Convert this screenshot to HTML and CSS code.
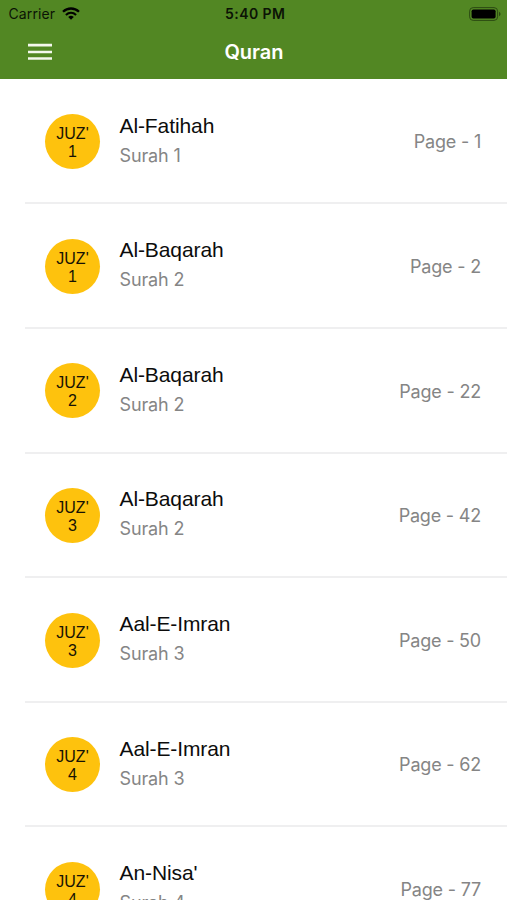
FILE: index.html
```html
<!DOCTYPE html>
<html lang="en">
<head>
<meta charset="utf-8">
<title>Quran</title>
<link rel="stylesheet" href="styles.css">
</head>
<body>
<header class="header">
  <div class="status">
    <div class="carrier"><span>Carrier</span>
      <svg class="wifi" viewBox="0 0 18 13" width="18" height="13"><g fill="none" stroke="#000"><path d="M1 4.800C5.500.4 12.500.4 17 4.800" stroke-width="2.300"/><path d="M3.900 8C7 5.100 11 5.100 14.100 8" stroke-width="2.100"/></g><path d="M6.200 9.900Q9 7.700 11.800 9.900L9 12.700Z"/></svg>
    </div>
    <div class="clock">5:40 PM</div>
    <svg class="battery" viewBox="0 0 32 14" width="32" height="14"><rect x=".6" y=".6" width="28" height="12.800" rx="3.600" fill="none" stroke="#2c4a13" stroke-width="1"/><rect x="2.600" y="2.500" width="24" height="9" rx="1.800"/><path d="M30 4.800Q31.600 5.500 31.600 7T30 9.200Z" fill="#2c4a13"/></svg>
  </div>
  <nav class="nav">
    <svg class="menu" viewBox="0 0 24 18" width="24" height="18"><path d="M0 2.200H24M0 9H24M0 15.500H24" stroke="#f4f8ed" stroke-width="2.700"/></svg>
    <h1 class="title">Quran</h1>
  </nav>
</header>
<main class="list">
  <div class="row"><div class="badge">JUZ'<br>1</div><div class="info"><div class="name">Al-Fatihah</div><div class="surah">Surah 1</div></div><div class="page">Page - 1</div></div>
  <div class="row"><div class="badge">JUZ'<br>1</div><div class="info"><div class="name">Al-Baqarah</div><div class="surah">Surah 2</div></div><div class="page">Page - 2</div></div>
  <div class="row"><div class="badge">JUZ'<br>2</div><div class="info"><div class="name">Al-Baqarah</div><div class="surah">Surah 2</div></div><div class="page">Page - 22</div></div>
  <div class="row"><div class="badge">JUZ'<br>3</div><div class="info"><div class="name">Al-Baqarah</div><div class="surah">Surah 2</div></div><div class="page">Page - 42</div></div>
  <div class="row"><div class="badge">JUZ'<br>3</div><div class="info"><div class="name">Aal-E-Imran</div><div class="surah">Surah 3</div></div><div class="page">Page - 50</div></div>
  <div class="row"><div class="badge">JUZ'<br>4</div><div class="info"><div class="name">Aal-E-Imran</div><div class="surah">Surah 3</div></div><div class="page">Page - 62</div></div>
  <div class="row"><div class="badge">JUZ'<br>4</div><div class="info"><div class="name">An-Nisa'</div><div class="surah">Surah 4</div></div><div class="page">Page - 77</div></div>
</main>
</body>
</html>
```
FILE: styles.css
```css
* { box-sizing: border-box; }
body {
  margin: 0;
  height: 900px;
  overflow: hidden;
  display: flex;
  flex-direction: column;
  background: #fff;
  font-family: Inter, "Liberation Sans", sans-serif;
}
.header { flex: none; height: 79.4px; background: #528723; }
.status {
  height: 27px;
  padding: 0 6px 0 8.5px;
  display: grid;
  grid-template-columns: 1fr auto 1fr;
  align-items: center;
  font-size: 14px;
  line-height: 27px;
  color: #0b1305;
}
.carrier { display: flex; align-items: center; gap: 6.5px; letter-spacing: 0.1px; }
.clock { font-weight: 600; letter-spacing: 0.45px; padding-left: 1px; }
.battery { justify-self: end; }
.nav {
  height: 50px;
  padding: 0 28px;
  display: grid;
  grid-template-columns: 1fr auto 1fr;
  align-items: center;
}
.title {
  margin: 0;
  padding-left: 1px;
  color: #fff;
  font-size: 20px;
  font-weight: 600;
  line-height: 50px;
}
.list { flex: 1; min-height: 0; padding-top: 0.5px; overflow: hidden; }
.row {
  height: 124.6px;
  margin-left: 25px;
  padding: 0 26px 0 20px;
  display: flex;
  align-items: center;
  border-bottom: 2px solid #efeff0;
}
.badge {
  flex: none;
  width: 55px;
  height: 55px;
  margin-top: 1px;
  padding-top: 11px;
  border-radius: 50%;
  background: #fec20d;
  color: #171204;
  font: 16px/18px "Liberation Sans", sans-serif;
  text-align: center;
}
.info { flex: 1; margin: -1px 0 0 19.5px; }
.name {
  color: #0c0c0c;
  font: 21px/30px "Liberation Sans", sans-serif;
  letter-spacing: -0.1px;
}
.surah { color: #858585; font-size: 18px; line-height: 30px; letter-spacing: -0.15px; }
.page { margin-top: 1.4px; color: #858585; font-size: 18px; letter-spacing: -0.2px; }
```
